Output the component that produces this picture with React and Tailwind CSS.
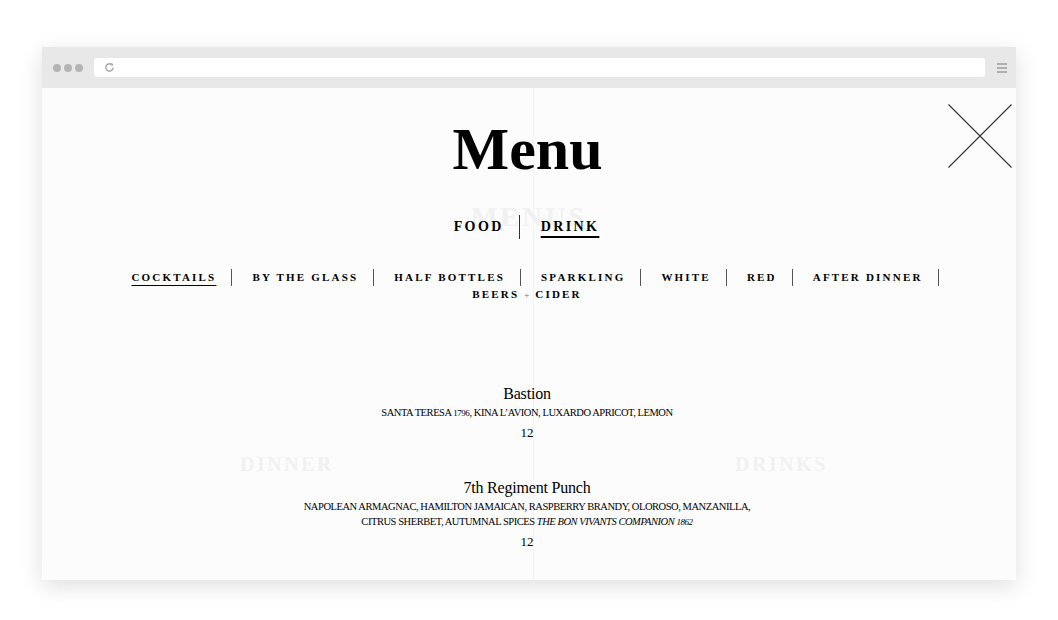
import React from "react";

const serif = { fontFamily: '"Liberation Serif", "DejaVu Serif", serif' };

const row1 = ["COCKTAILS", "BY THE GLASS", "HALF BOTTLES", "SPARKLING", "WHITE", "RED", "AFTER DINNER"];

function Cat({ label, active }) {
  return (
    <div className="flex items-center h-[17px]">
      <span className={"text-[11px] font-bold tracking-[2.2px] leading-none text-black " + (active ? "underline underline-offset-[4px] decoration-[1px]" : "")}>
        {label}
      </span>
      <span className="ml-[15px] w-px h-[17px] bg-[#555]" />
    </div>
  );
}

function Item({ name, children }) {
  return (
    <div className="flex flex-col items-center text-black">
      <div className="text-[16px] leading-[20px] tracking-[-0.2px]">{name}</div>
      <div className="mt-[1px] text-[10.5px] leading-[15px] text-center tracking-[-0.45px]">{children}</div>
      <div className="mt-[4px] text-[13px] leading-[16px]">12</div>
    </div>
  );
}

export default function App() {
  return (
    <div className="w-[1058px] h-[620px] bg-white pt-[47px] pl-[42px]" style={serif}>
      <div className="w-[974px] h-[533px] flex flex-col shadow-[0_6px_22px_rgba(0,0,0,0.13)]">
        <div className="h-[41px] bg-[#e8e8e8] flex items-center pl-[11px] pr-[9px]">
          <div className="flex gap-[3px]">
            <span className="w-[8px] h-[8px] rounded-full bg-[#b4b4b4]" />
            <span className="w-[8px] h-[8px] rounded-full bg-[#b4b4b4]" />
            <span className="w-[8px] h-[8px] rounded-full bg-[#b4b4b4]" />
          </div>
          <div className="ml-[11px] flex-1 h-[19px] bg-white rounded-[3px] flex items-center pl-[10px]">
            <svg width="11" height="11" viewBox="0 0 12 12" fill="none">
              <path d="M10 6 A4 4 0 1 1 8.3 2.7" stroke="#9a9a9a" strokeWidth="1.3" />
              <path d="M7.2 1.6 L9.3 2.4 L8.6 4.5" stroke="#9a9a9a" strokeWidth="1.1" fill="none" />
            </svg>
          </div>
          <div className="ml-[12px] flex flex-col gap-[2px] w-[10px]">
            <span className="h-[2px] bg-[#b0b0b0]" />
            <span className="h-[2px] bg-[#b0b0b0]" />
            <span className="h-[2px] bg-[#b0b0b0]" />
          </div>
        </div>
        <div className="relative flex-1 bg-[#fcfcfc] overflow-hidden">
          <div className="absolute left-[491px] top-0 bottom-0 w-px bg-[#f3f3f3]" />
          <div className="absolute left-0 right-0 top-[108px] text-center text-[28px] font-bold tracking-[3px] text-[#f1f1f1]">MENUS</div>
          <div className="absolute left-[198px] top-[361px] text-[20px] font-bold tracking-[2.5px] text-[#f1f1f1]">DINNER</div>
          <div className="absolute left-[693px] top-[361px] text-[20px] font-bold tracking-[2.5px] text-[#f1f1f1]">DRINKS</div>
          <svg className="absolute right-[4px] top-[16px]" width="64" height="64" viewBox="0 0 64 64">
            <path d="M0.5 0.5 L63.5 63.5 M63.5 0.5 L0.5 63.5" stroke="#333" strokeWidth="1.1" />
          </svg>
          <div className="relative flex flex-col items-center">
            <h1 className="mt-[27px] text-[60px] leading-[68px] font-bold text-black ml-[-3px]">Menu</h1>
            <div className="mt-[32px] flex items-center ml-[-5px]">
              <span className="text-[14px] font-bold tracking-[2.4px] leading-none text-black">FOOD</span>
              <span className="ml-[15px] mr-[21px] w-px h-[24px] bg-[#333]" />
              <span className="text-[14px] font-bold tracking-[2.4px] leading-none text-black underline underline-offset-[5px] decoration-[1.5px]">DRINK</span>
            </div>
            <div className="mt-[30px] flex flex-col items-center">
              <div className="flex items-center gap-[20px] pl-[12px]">
                {row1.map((c, i) => (
                  <Cat key={c} label={c} active={i === 0} />
                ))}
              </div>
              <div className="flex items-center h-[17px] ml-[-4px]">
                <span className="text-[11px] font-bold tracking-[2.2px] leading-none text-black">
                  BEERS <span className="font-normal text-[9px] text-gray-500 tracking-[1px]">+</span> CIDER
                </span>
              </div>
            </div>
            <div className="mt-[81px] flex flex-col items-center gap-[37px] ml-[-4px]">
              <Item name="Bastion">SANTA TERESA <span className="text-[9px]">1796</span>, KINA L’AVION, LUXARDO APRICOT, LEMON</Item>
              <Item name="7th Regiment Punch">
                NAPOLEAN ARMAGNAC, HAMILTON JAMAICAN, RASPBERRY BRANDY, OLOROSO, MANZANILLA,
                <br />
                CITRUS SHERBET, AUTUMNAL SPICES <i>THE BON VIVANTS COMPANION <span className="text-[9px]">1862</span></i>
              </Item>
            </div>
          </div>
        </div>
      </div>
    </div>
  );
}
